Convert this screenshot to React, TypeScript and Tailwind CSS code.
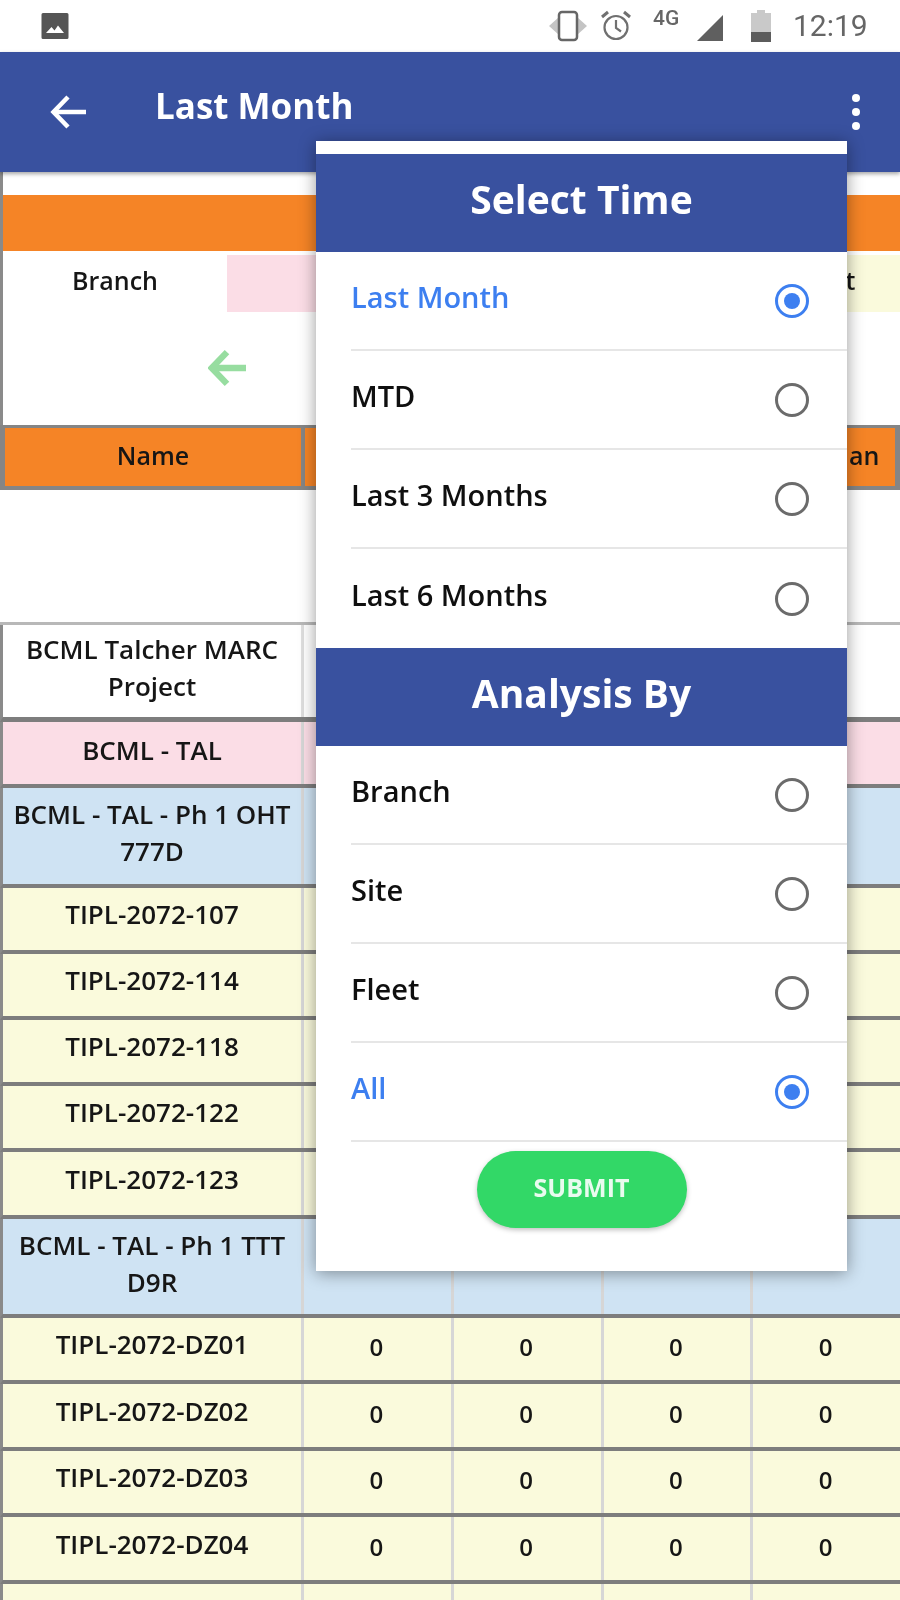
import React from "react";

const FONT = "font-['Open_Sans',sans-serif]";

function ImageIcon() {
  return (
    <svg width="28" height="28" viewBox="0 0 28 28" className="block">
      <path d="M2 1h24a1.500 1.500 0 0 1 1.500 1.500v23a1.500 1.500 0 0 1-1.500 1.500H2a1.500 1.500 0 0 1-1.500-1.500V2.500A1.500 1.500 0 0 1 2 1z" fill="#555555" />
      <path d="M5 21l5.500-6 3 3.500 3.500-5 6 7.500z" fill="#ffffff" />
    </svg>
  );
}

function VibrateIcon() {
  return (
    <svg width="40" height="32" viewBox="0 0 40 32" className="block">
      <path d="M1 16l10-9v18z" fill="#c4c4c4" />
      <path d="M39 16l-10-9v18z" fill="#c4c4c4" />
      <rect x="11" y="2" width="18" height="28" rx="3" fill="#ffffff" stroke="#666666" strokeWidth="2.500" />
    </svg>
  );
}

function AlarmIcon() {
  return (
    <svg width="32" height="32" viewBox="0 0 32 32" className="block" fill="none" stroke="#707070" strokeWidth="2.200">
      <circle cx="16" cy="17.500" r="11.500" />
      <path d="M16 10v8l5 3.500" />
      <path d="M2 7l6-5M30 7l-6-5" strokeWidth="3" />
    </svg>
  );
}

function SignalIcon() {
  return (
    <svg width="26" height="26" viewBox="0 0 26 26" className="block">
      <path d="M0 26L26 0v26z" fill="#5f5f5f" />
    </svg>
  );
}

function BatteryIcon() {
  return (
    <svg width="20" height="32" viewBox="0 0 20 32" className="block">
      <path d="M6 0h8v3h6v29H0V3h6z" fill="#c9c9c9" />
      <rect x="0" y="22" width="20" height="10" fill="#5c5c5c" />
    </svg>
  );
}

function BackArrow({ color, size, width }: { color: string; size: number; width: number }) {
  return (
    <svg width={size} height={size} viewBox="0 0 36 36" className="block" fill="none" stroke={color} strokeWidth={width}>
      <path d="M36 18H4" />
      <path d="M18 3L3.500 18 18 33" />
    </svg>
  );
}

function Radio({ on }: { on?: boolean }) {
  return on ? (
    <span className="flex h-[34px] w-[34px] items-center justify-center rounded-full border-[3px] border-[#3d7ff0]">
      <span className="block h-[16px] w-[16px] rounded-full bg-[#3d7ff0]" />
    </span>
  ) : (
    <span className="block h-[34px] w-[34px] rounded-full border-[3px] border-[#6b6b6b]" />
  );
}

function Option({ label, on, last }: { label: string; on?: boolean; last?: boolean }) {
  return (
    <div className={`ml-[35px] flex h-[99px] items-center justify-between pr-[38px] ${last ? "" : "border-b-2 border-[#e6e6e6]"}`}>
      <span className={`pb-[8px] text-[29px] font-semibold leading-[38px] ${on ? "text-[#3d7ff0]" : "text-[#0f0f0f]"}`}>{label}</span>
      <Radio on={on} />
    </div>
  );
}

function Heading({ children }: { children: React.ReactNode }) {
  return (
    <div className="flex h-[98px] items-center justify-center bg-[#39519f] pb-[8px] text-[39px] font-bold text-white">
      {children}
    </div>
  );
}

function Row({
  name,
  bg,
  h,
  weight = "border-b-4",
  zeros,
  tall,
  sep = "border-[#d6d6d6]",
}: {
  name: React.ReactNode;
  bg: string;
  h: string;
  weight?: string;
  zeros?: boolean;
  tall?: boolean;
  sep?: string;
}) {
  return (
    <div className={`flex ${h} ${bg} ${weight} border-[#7d7d7d] border-l-[3px] border-l-[#8a8a8a]`}>
      <div className={`flex w-[298px] items-center justify-center px-[4px] text-center text-[26px] font-semibold leading-[37px] text-[#161616] ${tall ? "pb-[6px]" : "pb-[9px]"}`}>
        {name}
      </div>
      {[0, 1, 2, 3].map((i) => (
        <div key={i} className={`flex flex-1 items-center justify-center border-l-[3px] pb-[4px] pr-[2px] ${sep} text-[24px] font-semibold text-[#161616]`}>
          {zeros ? "0" : ""}
        </div>
      ))}
    </div>
  );
}

export default function App() {
  const yellow = "bg-[#fafadc]";
  const blue = "bg-[#cfe3f3]";
  return (
    <div className={`relative h-[1600px] w-[900px] overflow-hidden bg-white ${FONT}`}>
      <div className="h-full w-full blur-[0.6px]">
        {/* status bar */}
        <div className="flex h-[52px] items-center bg-white">
          <div className="ml-[41px]">
            <ImageIcon />
          </div>
          <div className="ml-[479px]">
            <VibrateIcon />
          </div>
          <div className="ml-[12px]">
            <AlarmIcon />
          </div>
          <span className="ml-[21px] mb-[16px] w-[32px] font-['Roboto',sans-serif] text-[21px] font-medium leading-[20px] text-[#666666]">4G</span>
          <div className="ml-[12px] mt-[3px]">
            <SignalIcon />
          </div>
          <div className="ml-[28px]">
            <BatteryIcon />
          </div>
          <span className="ml-[22px] font-['Roboto',sans-serif] text-[30px] leading-[34px] text-[#666666]">12:19</span>
        </div>

        {/* app bar */}
        <div className="relative z-10 flex h-[120px] items-center bg-[#39519f] pl-[50px] pr-[40px] shadow-[0_2px_4px_rgba(0,0,0,0.35)]">
          <BackArrow color="#ffffff" size={36} width={4.5} />
          <span className="ml-[69px] pb-[12px] text-[35px] font-bold text-white">Last Month</span>
          <div className="ml-auto flex flex-col gap-[6px]">
            <span className="block h-[8px] w-[8px] rounded-full bg-white" />
            <span className="block h-[8px] w-[8px] rounded-full bg-white" />
            <span className="block h-[8px] w-[8px] rounded-full bg-white" />
          </div>
        </div>

        {/* table top */}
        <div className="h-[253px] border-l-[3px] border-[#8a8a8a] pt-[23px]">
          <div className="h-[56px] bg-[#f58426]" />
          <div className="mt-[4px] flex h-[57px]">
            <div className="flex w-[224px] items-start justify-center pt-[8px] text-[25px] font-semibold leading-[34px] text-[#161616]">Branch</div>
            <div className="w-[200px] bg-[#fbdde6]" />
            <div className="flex-1" />
            <div className="flex w-[100px] justify-center bg-[#fafadc] pt-[8px] text-[25px] font-semibold leading-[34px] text-[#161616]">
              <span className="mr-[48px]">Fleet</span>
            </div>
          </div>
          <div className="ml-[205px] mt-[37px]">
            <BackArrow color="#97dda0" size={38} width={6} />
          </div>
        </div>

        {/* column header */}
        <div className="flex h-[65px] border-y-[3px] border-b-4 border-[#858585] border-l-[5px] border-r-[5px] bg-[#f58426] text-[25px] font-semibold text-[#161616]">
          <div className="flex w-[296px] items-center justify-center pb-[2px]">Name</div>
          <div className="w-[149px] border-l-4 border-[#858585]" />
          <div className="w-[149px] border-l-4 border-[#858585]" />
          <div className="w-[149px] border-l-4 border-[#858585]" />
          <div className="flex flex-1 items-center justify-center border-l-4 border-[#858585] pb-[2px]">
            <span className="whitespace-nowrap pr-[8px]">Total Plan</span>
          </div>
        </div>

        <div className="h-[132px]" />

        {/* rows */}
        <div className="h-[3px] bg-[#b8b8b8]" />
        <Row name="BCML Talcher MARC Project" bg="bg-white" h="h-[97px]" weight="border-b-[5px]" sep="border-[#dedede]" tall />
        <Row name="BCML - TAL" bg="bg-[#fbdde6]" h="h-[66px]" tall />
        <Row name="BCML - TAL - Ph 1 OHT 777D" bg={blue} h="h-[100px]" tall />
        <Row name="TIPL-2072-107" bg={yellow} h="h-[66px]" />
        <Row name="TIPL-2072-114" bg={yellow} h="h-[66px]" />
        <Row name="TIPL-2072-118" bg={yellow} h="h-[66px]" />
        <Row name="TIPL-2072-122" bg={yellow} h="h-[66px]" />
        <Row name="TIPL-2072-123" bg={yellow} h="h-[67px]" />
        <Row name="BCML - TAL - Ph 1 TTT D9R" bg={blue} h="h-[99px]" tall />
        <Row name="TIPL-2072-DZ01" bg={yellow} h="h-[66px]" zeros />
        <Row name="TIPL-2072-DZ02" bg={yellow} h="h-[67px]" zeros />
        <Row name="TIPL-2072-DZ03" bg={yellow} h="h-[66px]" zeros />
        <Row name="TIPL-2072-DZ04" bg={yellow} h="h-[67px]" zeros />
        <Row name="" bg={yellow} h="h-[66px]" />

        {/* dialog over the table */}
        <div className="absolute left-[316px] top-[141px] z-20 h-[1130px] w-[531px] bg-white pt-[13px] shadow-[0_2px_16px_rgba(0,0,0,0.4)]">
          <Heading>Select Time</Heading>
          <Option label="Last Month" on />
          <Option label="MTD" />
          <Option label="Last 3 Months" />
          <Option label="Last 6 Months" last />
          <Heading>Analysis By</Heading>
          <Option label="Branch" />
          <Option label="Site" />
          <Option label="Fleet" />
          <Option label="All" on />
          <div className="flex justify-center pt-[9px]">
            <button className="flex h-[77px] w-[210px] items-center justify-center rounded-full bg-[#32d867] pb-[4px] text-[25px] font-bold text-[#e9fbef] shadow-[0_2px_5px_rgba(0,0,0,0.25)]">
              SUBMIT
            </button>
          </div>
        </div>
      </div>
    </div>
  );
}
